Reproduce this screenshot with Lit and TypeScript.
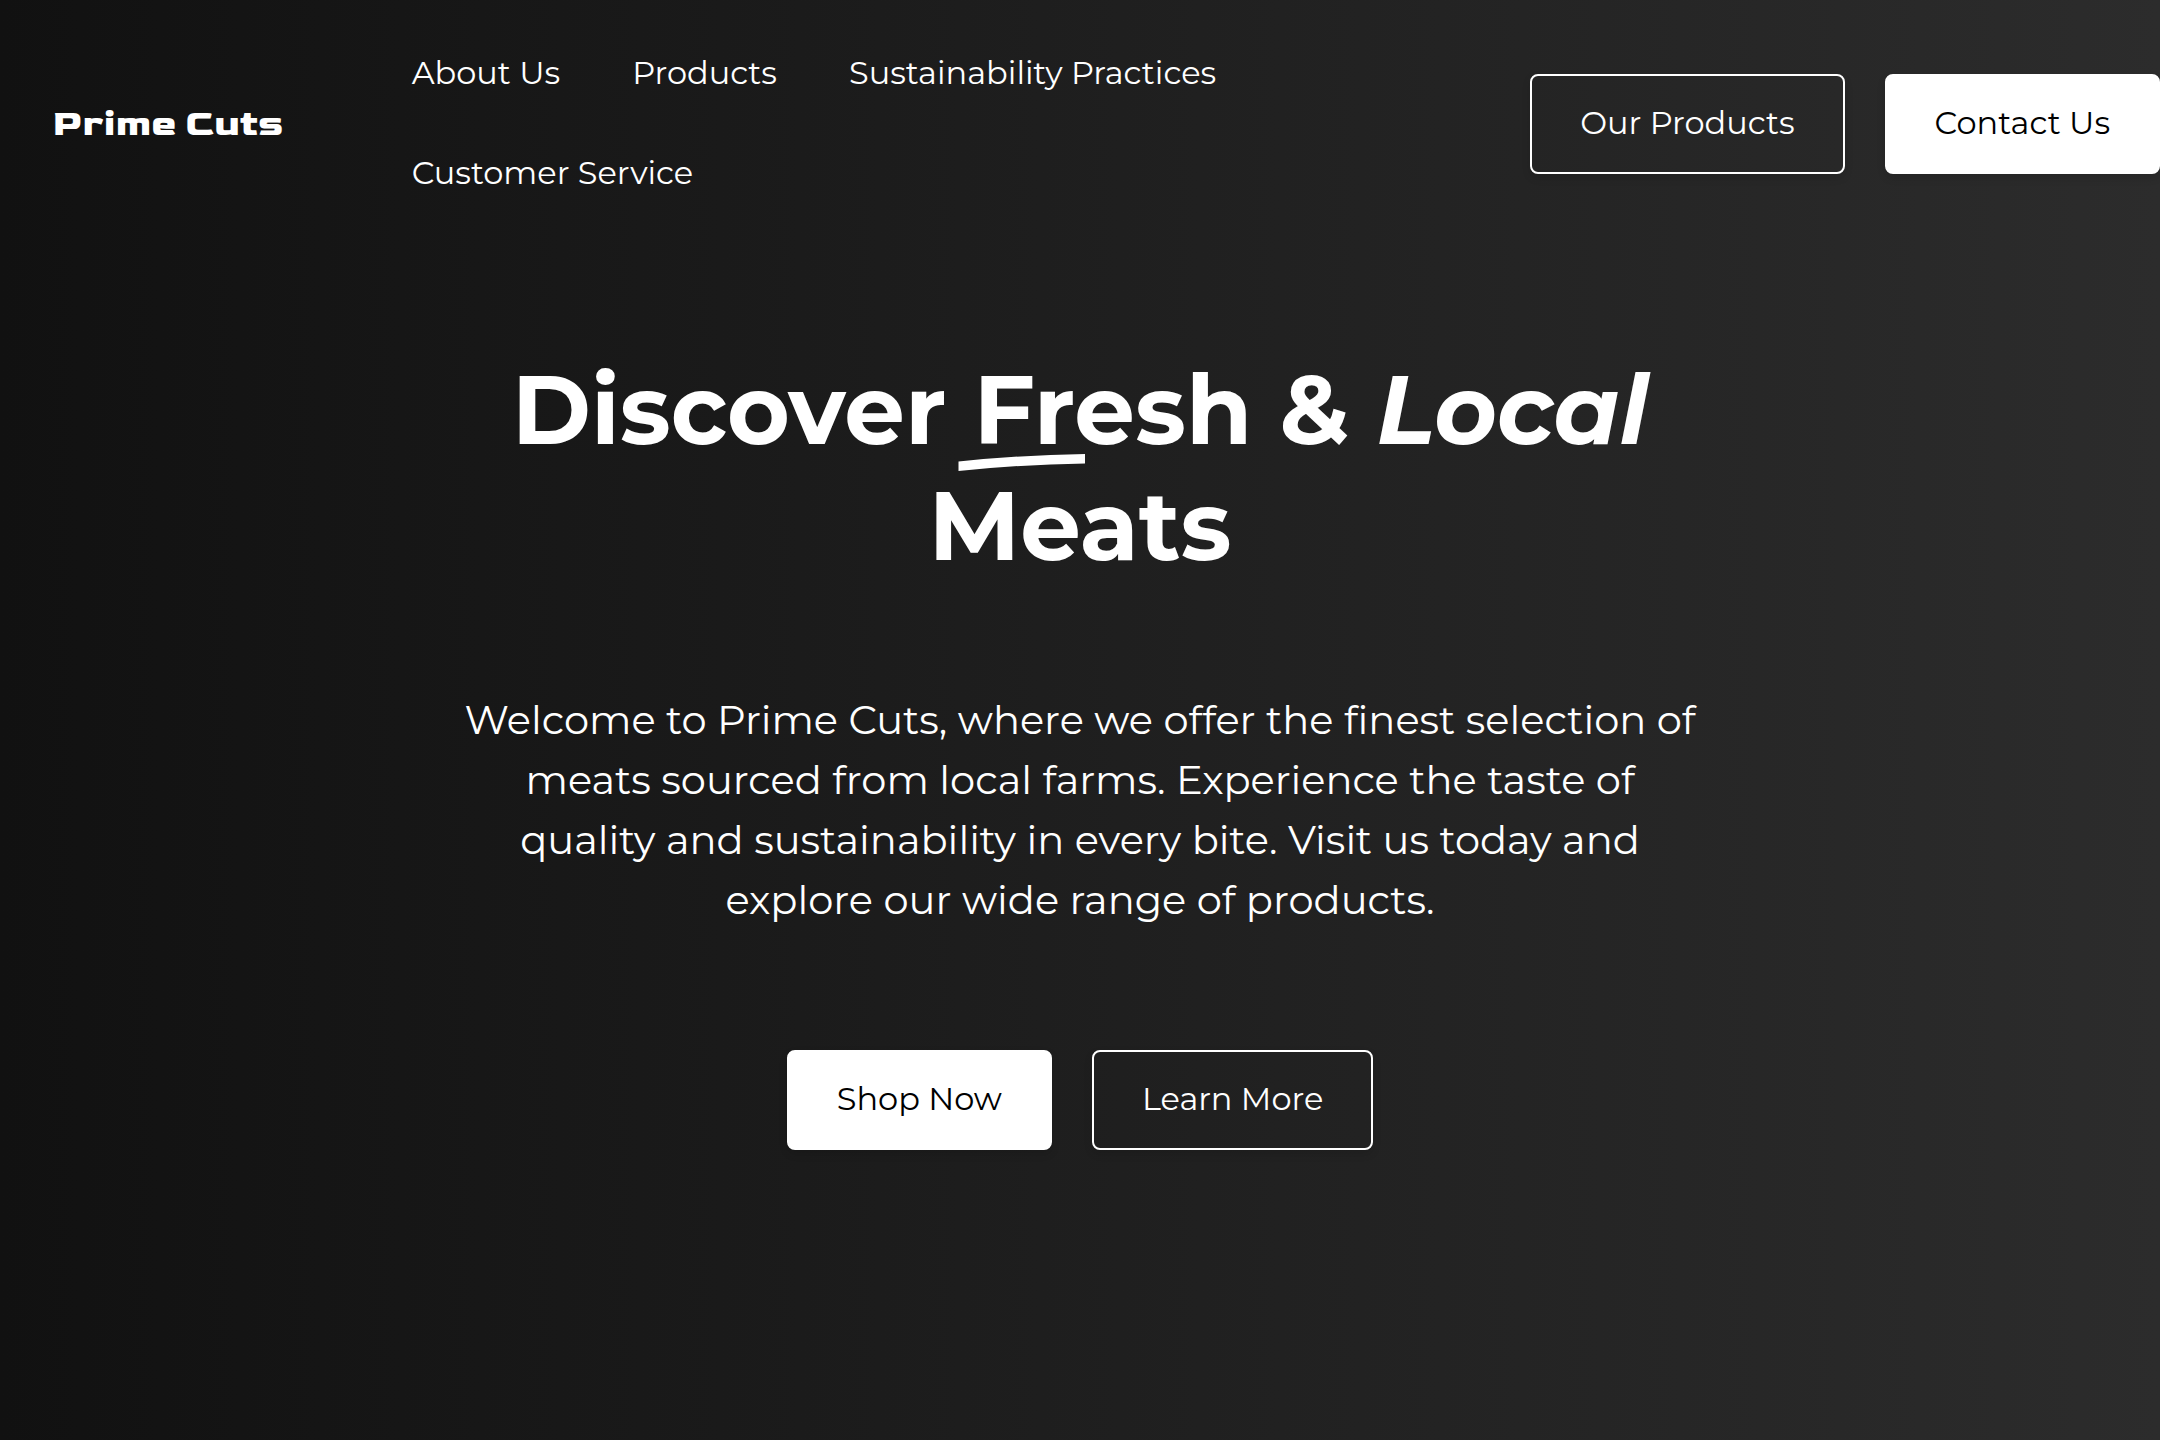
import { LitElement, html, css } from "lit";
import { customElement } from "lit/decorators.js";

const links = ["About Us", "Products", "Sustainability Practices", "Customer Service"];

@customElement("app-root")
export class AppRoot extends LitElement {
  static styles = css`
    :host {
      display: block;
      min-height: 100vh;
      background: linear-gradient(90deg, #111111, #2c2c2c);
      color: #ffffff;
      font-family: "Montserrat", "Inter", sans-serif;
      font-size: 32px;
      line-height: 48px;
    }
    .header {
      display: flex;
      align-items: center;
      padding: 24px 0 24px 52px;
    }
    .logo {
      color: inherit;
      text-decoration: none;
      white-space: nowrap;
      font-family: "Goldman", "DejaVu Sans", sans-serif;
      font-weight: 700;
      font-size: 38px;
      line-height: 50px;
      margin-right: 128px;
    }
    .nav {
      flex: 1;
      min-width: 0;
      display: flex;
      flex-wrap: wrap;
      column-gap: 72px;
      margin-right: 40px;
    }
    .link {
      color: inherit;
      text-decoration: none;
      white-space: nowrap;
      padding: 25px 0 27px;
    }
    .actions {
      display: flex;
      gap: 40px;
    }
    .button {
      box-sizing: border-box;
      border: 2px solid #ffffff;
      border-radius: 8px;
      padding: 23px 48px 25px;
      background: transparent;
      color: #ffffff;
      font: inherit;
      white-space: nowrap;
      cursor: pointer;
      box-shadow: 0 4px 8px rgba(0, 0, 0, 0.12);
    }
    .solid {
      background: #ffffff;
      color: #000000;
    }
    .hero {
      box-sizing: border-box;
      max-width: 1280px;
      margin: 0 auto;
      padding: 104px 16px 120px;
      display: flex;
      flex-direction: column;
      align-items: center;
      text-align: center;
    }
    .title {
      margin: 0 0 106px;
      font-size: 96px;
      line-height: 116px;
      font-weight: 700;
    }
    .marked {
      position: relative;
      display: inline-block;
    }
    .stroke {
      position: absolute;
      left: -15px;
      top: 101px;
      width: 128px;
      height: 18px;
    }
    .lead {
      margin: 0 0 120px;
      font-size: 40px;
      line-height: 60px;
    }
  `;

  render() {
    return html`
      <header class="header">
        <a class="logo" href="#">Prime Cuts</a>
        <nav class="nav" aria-label="Main">
          ${links.map((label) => html`<a class="link" href="#">${label}</a>`)}
        </nav>
        <div class="actions">
          <button class="button" type="button">Our Products</button>
          <button class="button solid" type="button">Contact Us</button>
        </div>
      </header>
      <main class="hero">
        <h1 class="title">
          Discover
          <span class="marked">Fresh<svg class="stroke" viewBox="0 0 128 18" aria-hidden="true">
            <path d="M0.5 8.5Q64 2 127 1V10.500Q64 11.500 0.500 18Z" fill="#ffffff"></path>
          </svg></span>
          &amp; <em>Local</em> Meats
        </h1>
        <p class="lead">
          Welcome to Prime Cuts, where we offer the finest selection of meats sourced from local
          farms. Experience the taste of quality and sustainability in every bite. Visit us today
          and explore our wide range of products.
        </p>
        <div class="actions">
          <button class="button solid" type="button">Shop Now</button>
          <button class="button" type="button">Learn More</button>
        </div>
      </main>
    `;
  }
}
